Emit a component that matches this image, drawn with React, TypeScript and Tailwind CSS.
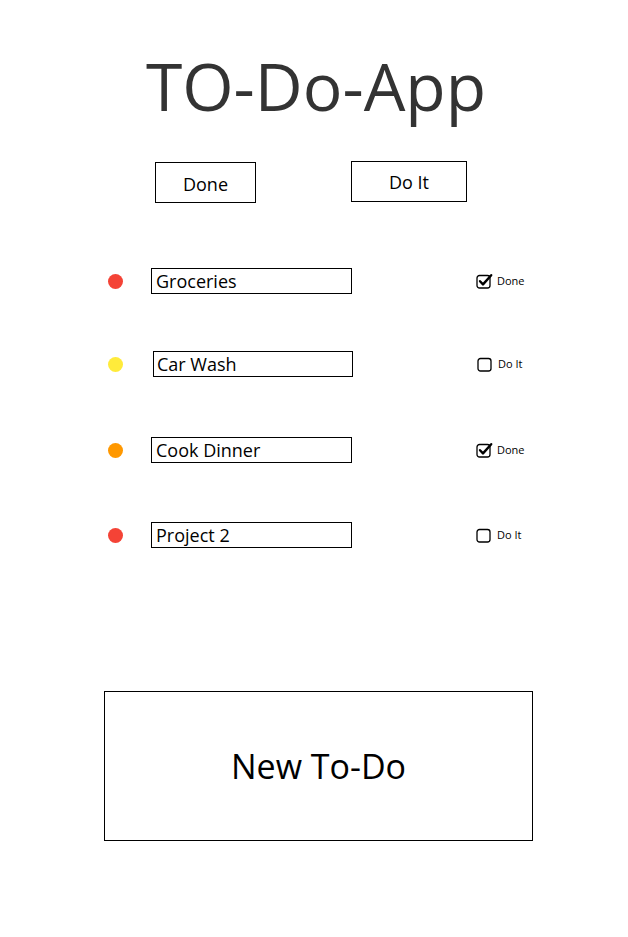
import React from 'react';

type Todo = { title: string; color: string; done: boolean; indent?: boolean };

const todos: Todo[] = [
    { title: 'Groceries', color: 'bg-[#f44336]', done: true },
    { title: 'Car Wash', color: 'bg-[#ffeb3b]', done: false, indent: true },
    { title: 'Cook Dinner', color: 'bg-[#ff9800]', done: true },
    { title: 'Project 2', color: 'bg-[#f44336]', done: false },
];

const CheckIcon = ({ checked }: { checked: boolean }) => (
    <svg width="17" height="16" viewBox="0 0 17 16" fill="none">
        <rect x="1" y="2.5" width="13" height="12.5" rx="2.5" stroke="#000" strokeWidth="1.3" />
        {checked && (
            <path d="M4 8.2 L7 11.4 L15.2 2.2" stroke="#000" strokeWidth="2.4" strokeLinecap="round" strokeLinejoin="round" />
        )}
    </svg>
);

const App = () => {
    return (
        <div className="w-[628px] min-h-[937px] bg-white text-black font-['Open_Sans',sans-serif]">
            <h1 className="pt-[52px] text-center text-[66px] leading-[66px] text-[#333333] pl-[4px]">TO-Do-App</h1>

            {/* filter buttons */}
            <div className="flex items-start mt-[43px]">
                <button className="ml-[155px] mt-[1px] w-[101px] h-[41px] border border-black text-[18px] leading-none pt-[2px]">Done</button>
                <button className="ml-[95px] w-[116px] h-[41px] border border-black text-[18px] leading-none">Do It</button>
            </div>

            {/* list */}
            <div className="flex flex-col mt-[65px]">
                {todos.map((t, i) => (
                    <div key={i} className={`flex items-center h-[26px] ${i === 0 ? '' : i === 1 ? 'mt-[57px]' : i === 2 ? 'mt-[60px]' : 'mt-[59px]'}`}>
                        <span className={`ml-[108px] w-[15px] h-[15px] rounded-full ${t.color}`}></span>
                        <div className={`${t.indent ? 'ml-[30px] w-[200px] pl-[3px]' : 'ml-[28px] w-[201px] pl-[4px]'} h-[26px] border border-black flex items-center text-[18px] pt-[1px]`}>
                            {t.title}
                        </div>
                        <label className="ml-[124px] flex items-center gap-[4px] text-[11px]">
                            <CheckIcon checked={t.done} />
                            <span>{t.done ? 'Done' : 'Do It'}</span>
                        </label>
                    </div>
                ))}
            </div>

            <button className="block ml-[104px] mt-[143px] w-[429px] h-[150px] border border-black text-[34px]">
                New To-Do
            </button>
        </div>
    );
};

export default App;
